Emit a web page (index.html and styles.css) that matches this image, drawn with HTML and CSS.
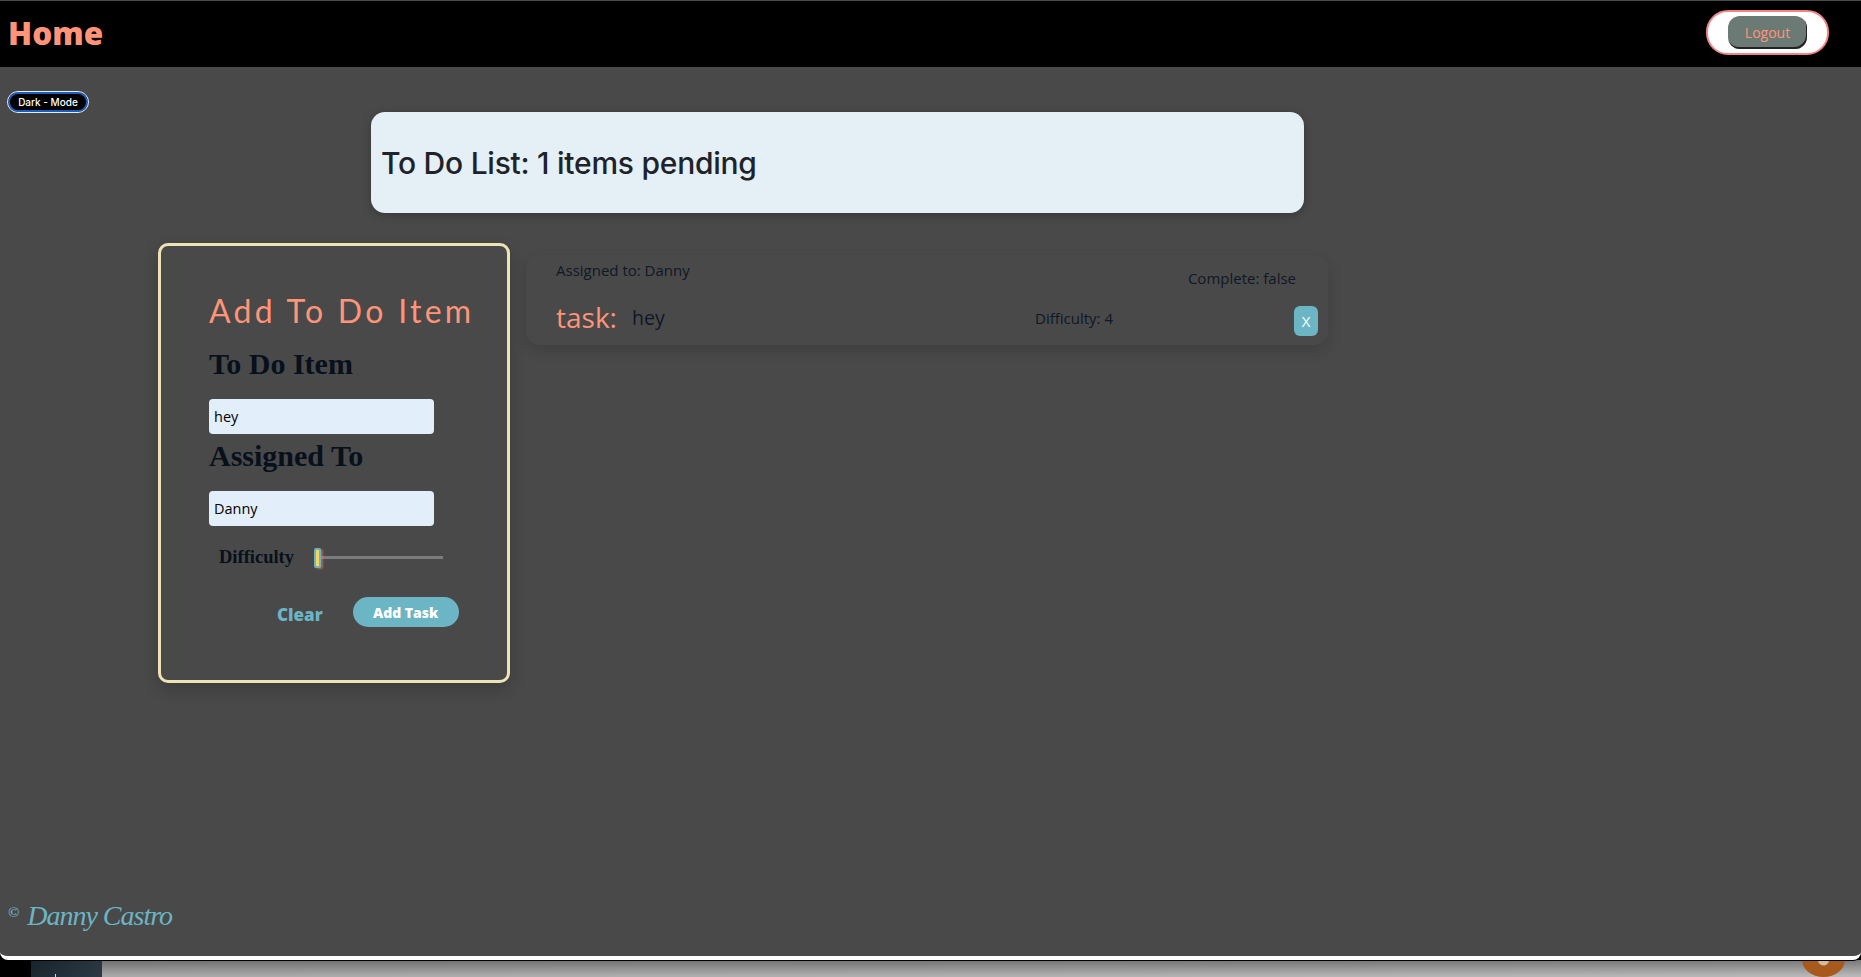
FILE: index.html
```html
<!DOCTYPE html>
<html lang="en">
<head>
  <meta charset="UTF-8" />
  <title>To Do List</title>
  <meta name="viewport" content="width=device-width, initial-scale=1.0" />
  <link rel="stylesheet" href="styles.css">
</head>
<body>
  <div class="app">
    <header class="navbar">
      <h1 class="brand">Home</h1>
      <div class="logout-wrap">
        <button class="logout" type="button">Logout</button>
      </div>
    </header>

    <main class="content">
      <div class="top-row">
        <button class="mode-toggle" type="button">Dark - Mode</button>
        <div class="pending">
          <h2>To Do List: 1 items pending</h2>
        </div>
      </div>

      <div class="todo-row">
        <form class="todo-form">
          <h3 class="form-title">Add To Do Item</h3>

          <label class="field-label" for="item">To Do Item</label>
          <input class="field" type="text" id="item" value="hey" />

          <label class="field-label second" for="assignee">Assigned To</label>
          <input class="field" type="text" id="assignee" value="Danny" />

          <div class="difficulty">
            <label for="difficulty">Difficulty</label>
            <input type="range" id="difficulty" min="1" max="5" value="1" />
          </div>

          <div class="form-actions">
            <button class="clear" type="button">Clear</button>
            <button class="add" type="submit">Add Task</button>
          </div>
        </form>

        <section class="task-card">
          <div class="task-top">
            <span class="assigned">Assigned to: Danny</span>
            <span class="complete">Complete: false</span>
          </div>
          <div class="task-bottom">
            <span class="task-label">task:</span>
            <span class="task-name">hey</span>
            <span class="task-difficulty">Difficulty: 4</span>
            <button class="remove" type="button">X</button>
          </div>
        </section>
      </div>

      <footer class="signature"><span class="copy">©</span> Danny Castro</footer>
    </main>
  </div>

  <div class="behind">
    <div class="behind-dock"></div>
    <div class="behind-badge"></div>
  </div>
</body>
</html>
```

FILE: styles.css
```css
html, body {
  margin: 0;
  padding: 0;
  height: 100%;
  overflow: hidden;
  box-sizing: border-box;
  font-family: 'Open Sans', sans-serif;
  background: #000;
}

*, *::before, *::after {
  box-sizing: inherit;
}

.app {
  height: 960px;
  display: flex;
  flex-direction: column;
  background: #494949;
  border-top: 1px solid #4a4a4a;
  border-bottom: 4px solid #fff;
  border-radius: 0 0 8px 8px;
  box-shadow: 0 1px 0 #000;
  position: relative;
  z-index: 1;
}

.navbar {
  height: 66px;
  flex: none;
  background: #000;
  display: flex;
  align-items: center;
  justify-content: space-between;
  padding: 0 32px 4px 8px;
}

.brand {
  margin: 0;
  font-size: 31.5px;
  font-weight: 800;
  color: #ff9478;
}

.logout-wrap {
  width: 123px;
  height: 45px;
  background: #fff;
  border: 2px solid #f08585;
  border-radius: 22px;
  display: flex;
  align-items: center;
  justify-content: center;
}

.logout {
  width: 79px;
  height: 33px;
  padding: 0;
  background: #6c7a76;
  color: #ff9478;
  border: none;
  border-radius: 12px;
  box-shadow: inset -1px -2px 0 #222;
  font-family: inherit;
  font-size: 14px;
}

.content {
  flex: 1;
  display: flex;
  flex-direction: column;
}

.top-row {
  display: flex;
  align-items: flex-start;
  padding-top: 24px;
  padding-left: 7px;
}

.mode-toggle {
  width: 82px;
  height: 22px;
  padding: 0;
  background: #000;
  color: #fff;
  border: 1px solid #e6edf7;
  box-shadow: inset 0 0 0 2px #1a5fc0;
  border-radius: 11px;
  font-family: 'Inter', sans-serif;
  font-size: 10px;
  font-weight: 500;
}

.pending {
  width: 933px;
  height: 101px;
  margin-left: 282px;
  margin-top: 21px;
  padding-left: 10px;
  display: flex;
  align-items: center;
  background: #e4eff6;
  border-radius: 14px;
  box-shadow: 0 2px 8px rgba(0,0,0,0.25);
}

.pending h2 {
  margin: 0;
  font-family: 'Inter', sans-serif;
  font-size: 30px;
  font-weight: 500;
  letter-spacing: -0.25px;
  color: #1d2329;
}

.todo-row {
  display: flex;
  align-items: flex-start;
  gap: 16px;
  padding-left: 158px;
  margin-top: 30px;
}

.todo-form {
  width: 352px;
  height: 440px;
  padding: 0 0 0 48px;
  border: 3px solid #ede3b4;
  border-radius: 10px;
  box-shadow: 0 6px 16px rgba(0,0,0,0.2);
}

.form-title {
  margin: 45px 0 0 0;
  font-family: 'Lato', cursive;
  font-size: 32px;
  line-height: 40px;
  font-weight: 400;
  letter-spacing: 3.3px;
  color: #ff9478;
  white-space: nowrap;
}

.field-label {
  display: block;
  margin-top: 16px;
  font-family: 'Liberation Serif', serif;
  font-size: 30px;
  line-height: 34px;
  font-weight: bold;
  color: #07101b;
}

.field-label.second {
  margin-top: 5px;
}

.field {
  display: block;
  width: 225px;
  height: 35px;
  margin-top: 18px;
  padding: 0 5px;
  background: #e3eefb;
  border: none;
  border-radius: 4px;
  font-family: inherit;
  font-size: 14.5px;
  color: #000;
}

.difficulty {
  display: flex;
  align-items: center;
  margin-top: 21px;
  padding-left: 10px;
}

.difficulty label {
  width: 95px;
  font-family: 'Liberation Serif', serif;
  font-size: 18.5px;
  font-weight: bold;
  color: #07101b;
}

.difficulty input {
  -webkit-appearance: none;
  appearance: none;
  width: 129px;
  height: 20px;
  margin: 0;
  background: transparent;
}

.difficulty input::-webkit-slider-runnable-track {
  height: 3px;
  background: #7c7c7c;
}

.difficulty input::-webkit-slider-thumb {
  -webkit-appearance: none;
  width: 7px;
  height: 20px;
  margin-top: -8px;
  background: #f5d75e;
  border: 2px solid #6bb5c5;
  border-radius: 2px;
  box-shadow: 2px 1px 2px rgba(255,120,90,0.55);
}

.form-actions {
  display: flex;
  align-items: center;
  margin-top: 29px;
  padding-left: 68px;
}

.clear {
  padding: 0;
  background: none;
  border: none;
  font-family: inherit;
  font-size: 17px;
  font-weight: 800;
  color: #6bb5c5;
  margin-top: 4px;
}

.add {
  width: 106px;
  height: 30px;
  margin-left: 30px;
  padding: 0;
  background: #6bb5c5;
  border: none;
  border-radius: 15px;
  font-family: inherit;
  font-size: 14px;
  font-weight: 800;
  color: #fff;
}

.task-card {
  width: 802px;
  height: 90px;
  margin-top: 12px;
  padding: 0 10px 9px 30px;
  display: flex;
  flex-direction: column;
  justify-content: space-between;
  border-radius: 14px;
  box-shadow: 0 6px 14px rgba(0,0,0,0.14);
  color: #0f1826;
}

.task-top {
  display: flex;
  justify-content: space-between;
  align-items: flex-start;
  padding-right: 22px;
  font-size: 15px;
}

.assigned {
  margin-top: 5px;
}

.complete {
  margin-top: 13px;
}

.task-bottom {
  display: flex;
  align-items: flex-end;
}

.task-label {
  width: 76px;
  margin-bottom: 4px;
  font-size: 28px;
  line-height: 30px;
  color: #ff9478;
}

.task-name {
  width: 403px;
  margin-bottom: 5px;
  font-size: 19.5px;
}

.task-difficulty {
  flex: 1;
  margin-bottom: 8px;
  font-size: 15px;
}

.remove {
  width: 24px;
  height: 30px;
  padding: 0;
  background: #6bb5c5;
  border: none;
  border-radius: 6px;
  font-family: inherit;
  font-size: 15px;
  color: #fff;
}

.signature {
  margin-top: auto;
  padding: 0 0 20px 8px;
  font-family: 'Liberation Serif', cursive;
  font-style: italic;
  font-size: 28px;
  line-height: 40px;
  letter-spacing: -1px;
  color: #6bb5c5;
}

.copy {
  font-size: 15px;
  font-weight: bold;
  vertical-align: 8px;
  font-style: normal;
  margin-right: 3px;
}

.behind {
  height: 17px;
  display: flex;
  justify-content: space-between;
  padding: 0 16px 0 31px;
  background: linear-gradient(180deg, rgba(0,0,0,0.35), rgba(0,0,0,0) 16px), linear-gradient(90deg, #000 31px, #a8a8a8 31px, #b8b8b8);
}

.behind-dock {
  width: 71px;
  background: linear-gradient(#cfd6da, #cfd6da) 24px 14px / 1px 3px no-repeat, linear-gradient(135deg, #18242c, #2c3a44);
}

.behind-badge {
  width: 43px;
  height: 34px;
  margin-top: -17px;
  background: radial-gradient(circle, #d8b89a 0 5px, #a65a1e 6px);
  border-radius: 50%;
}
```
